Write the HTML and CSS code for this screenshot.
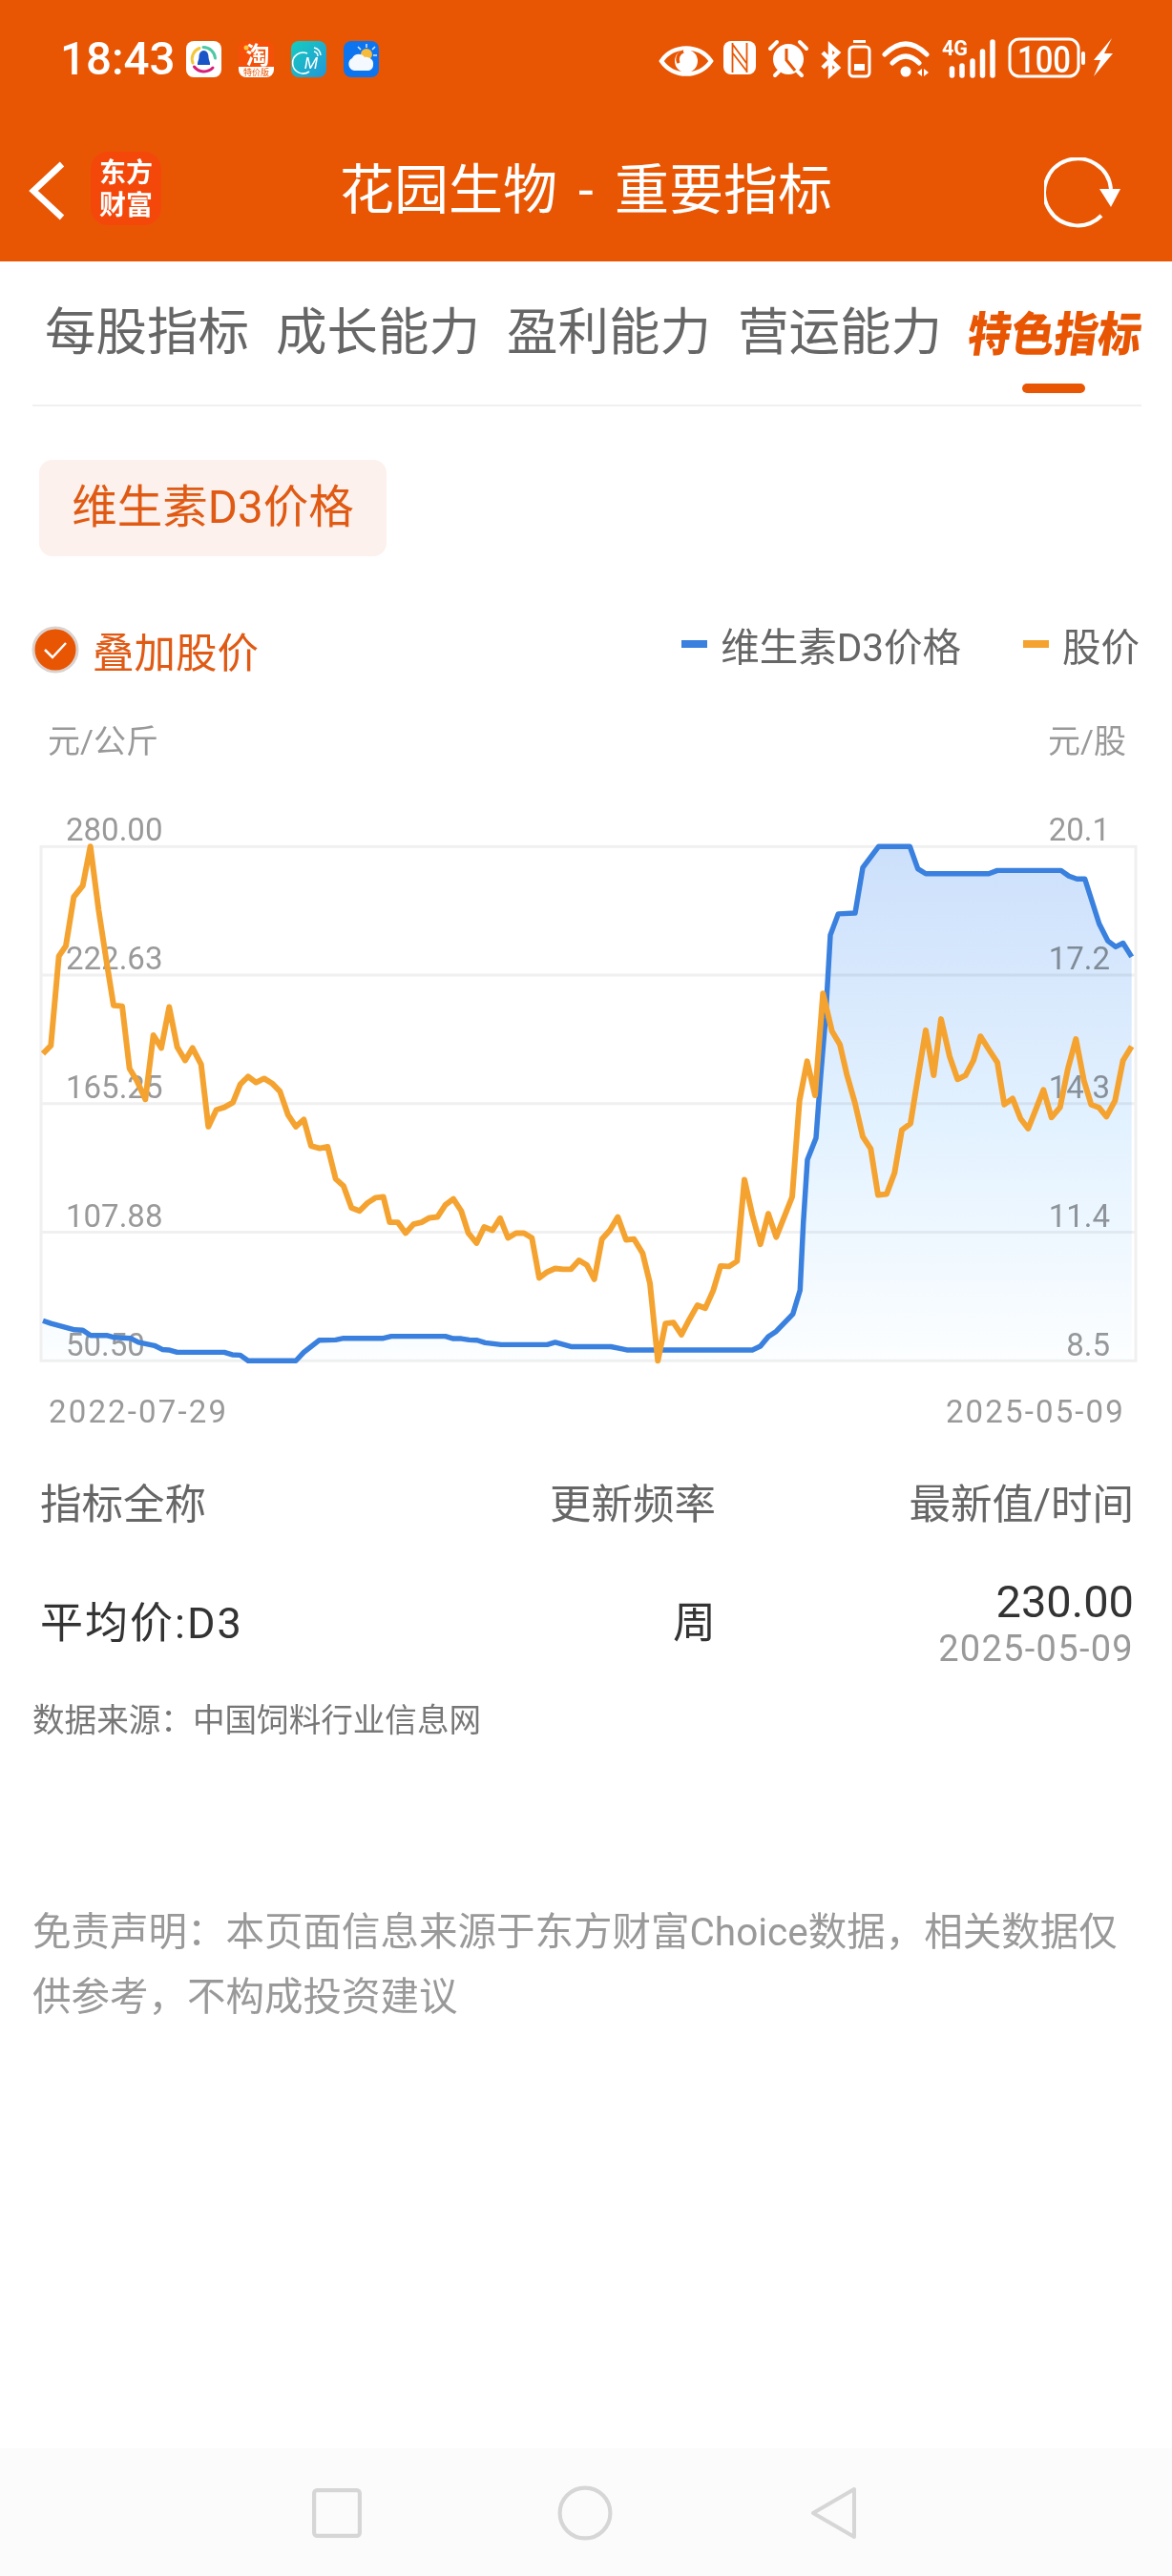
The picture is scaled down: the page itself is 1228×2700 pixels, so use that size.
FILE: index.html
```html
<!DOCTYPE html>
<html lang="zh-CN">
<head>
    <meta charset="UTF-8">
    <meta name="viewport" content="width=device-width, initial-scale=1.0">
    <title>花园生物 - 重要指标</title>
    <link rel="stylesheet" href="styles.css">
</head>
<body>
    <header class="top">
        <div class="status">
            <span class="clock">18:43</span>
            <div class="apps">
                <svg class="app" viewBox="0 0 37 38">
                    <rect width="37" height="38" rx="8" fill="#fff"/>
                    <path d="M7 23A12 12 0 0 1 14 7.500" fill="none" stroke="#f2c83a" stroke-width="3" stroke-linecap="round"/>
                    <path d="M18 6.500A12.500 12.500 0 0 1 30.500 18" fill="none" stroke="#4cc8a4" stroke-width="3" stroke-linecap="round"/>
                    <path d="M8.500 27A13 13 0 0 0 28 28" fill="none" stroke="#d81e78" stroke-width="3" stroke-linecap="round"/>
                    <path d="M18.500 10C14.500 10 13.500 14 13.500 17C13.500 20 11.500 22 12 25H25C25.500 22 23.500 20 23.500 17C23.500 14 22.500 10 18.500 10Z" fill="#1a55c8"/>
                </svg>
                <svg class="app" viewBox="0 0 37 38">
                    <rect width="37" height="38" rx="8" fill="#f65008"/>
                    <path d="M0 27H37V30A8 8 0 0 1 29 38H8A8 8 0 0 1 0 30Z" fill="#fff"/>
                    <circle cx="8" cy="7" r="2.500" fill="#ffc93a"/>
                    <text class="app-tao" x="20" y="24">淘</text>
                    <text class="app-tag" x="18.500" y="36">特价版</text>
                </svg>
                <svg class="app" viewBox="0 0 37 38">
                    <defs>
                        <linearGradient id="appTeal" x1="0" y1="0" x2="1" y2="1">
                            <stop offset="0" stop-color="#16cdbf"/>
                            <stop offset="1" stop-color="#2496d8"/>
                        </linearGradient>
                    </defs>
                    <rect width="37" height="38" rx="8" fill="url(#appTeal)"/>
                    <path d="M17 13A11 11 0 1 0 19 32" fill="none" stroke="#fff" stroke-width="1.600"/>
                    <path d="M24 7A9 9 0 0 1 31 15M24 11A5 5 0 0 1 28 16" fill="none" stroke="#fff" stroke-width="1.400"/>
                    <text class="app-m" x="21" y="29">M</text>
                </svg>
                <svg class="app" viewBox="0 0 37 38">
                    <rect width="37" height="38" rx="8" fill="#0d74f0"/>
                    <path d="M24 3V7M15 6L18 9M33 6L30 9M35 15H31" stroke="#d9e8ff" stroke-width="1.500" fill="none"/>
                    <circle cx="24" cy="14" r="6" fill="#f5bb3a"/>
                    <path d="M11 31A7 7 0 0 1 9 18C11 13 19 12 22 17C27 16 32 20 31 25C31 29 28 31 25 31Z" fill="#f4f8ff"/>
                </svg>
            </div>
            <svg class="sys" viewBox="0 0 480 48">
                <path d="M3 26C15 8 43 8 55 26C43 44 15 44 3 26Z" fill="none" stroke="#fff" stroke-width="4.500"/>
                <circle cx="29" cy="26" r="12" fill="#fff"/>
                <path d="M26 16A9 9 0 0 0 21 28A8 8 0 0 1 26 16Z" fill="#e85604" stroke="#e85604" stroke-width="3"/>

                <rect x="68" y="5" width="34" height="35" rx="8" fill="#fff"/>
                <path d="M77.500 7V38M92.500 7V38M78 9L92 28M78 18L92 36" fill="none" stroke="#e85604" stroke-width="1.800"/>

                <circle cx="136" cy="24" r="16" fill="#fff"/>
                <path d="M134 13V25L143 36" fill="none" stroke="#e85604" stroke-width="3"/>
                <path d="M117 13L124 6M148 6L155 13M122 41L126 37M150 41L146 37" fill="none" stroke="#fff" stroke-width="4" stroke-linecap="round"/>

                <path d="M172 17L188 33L180 40V10L188 17L172 33" fill="none" stroke="#fff" stroke-width="4.500"/>

                <rect x="204" y="4" width="13" height="3" fill="#fff"/>
                <rect x="200" y="11" width="21" height="31" rx="4" fill="none" stroke="#fff" stroke-width="3"/>
                <rect x="205" y="29" width="11" height="7" fill="#fff"/>

                <path d="M237 19Q259 -3 281 19M245 28Q259 14 273 28" fill="none" stroke="#fff" stroke-width="5" stroke-linecap="round"/>
                <circle cx="259" cy="37" r="5.500" fill="#fff"/>
                <path d="M276 34V42L271 38ZM278 34V42L283 38Z" fill="#fff"/>

                <text class="sys-net" x="297" y="20" textLength="27" lengthAdjust="spacingAndGlyphs">4G</text>
                <path d="M307.500 34V41M318 31V41M329 26V41M339.500 16V41M350 6V41" fill="none" stroke="#fff" stroke-width="5.500" stroke-linecap="round"/>

                <rect x="368" y="3" width="72" height="39" rx="10" fill="none" stroke="#fff" stroke-width="3"/>
                <text class="sys-batt" x="376" y="38" textLength="56" lengthAdjust="spacingAndGlyphs">100</text>
                <rect x="443" y="16" width="4" height="14" rx="2" fill="#fff"/>
                <path d="M475 2L456 25H463L456 42L476 18H467Z" fill="#fff"/>
            </svg>
        </div>
        <div class="titlebar">
            <svg class="back" viewBox="0 0 38 62">
                <path d="M35 3L5 31L35 59" fill="none" stroke="#fff" stroke-width="6.500"/>
            </svg>
            <div class="logo">东方<br>财富</div>
            <h1>花园生物 - 重要指标</h1>
            <svg class="refresh" viewBox="0 0 80 76">
                <path d="M70 33A35 35 0 1 0 60 61" fill="none" stroke="#fff" stroke-width="4"/>
                <path d="M58 33H80L70 52Z" fill="#fff"/>
            </svg>
        </div>
    </header>

    <nav class="tabs">
        <a class="tab">每股指标</a>
        <a class="tab">成长能力</a>
        <a class="tab">盈利能力</a>
        <a class="tab">营运能力</a>
        <a class="tab tab-on"><span class="tab-on-text">特色指标</span></a>
    </nav>

    <div class="pill">维生素D3价格</div>

    <div class="overlay">
        <div class="check-label">
            <svg class="check" viewBox="0 0 50 50">
                <circle cx="25" cy="25" r="23" fill="#e85604" stroke="#dbd2ce" stroke-width="3"/>
                <path d="M14 25L22 33L36 18" fill="none" stroke="#fff" stroke-width="2.500"/>
            </svg>
            <span>叠加股价</span>
        </div>
        <div class="legend">
            <span class="swatch swatch-blue"></span>
            <span class="legend-text">维生素D3价格</span>
            <span class="swatch swatch-orange"></span>
            <span class="legend-text">股价</span>
        </div>
    </div>

    <div class="units">
        <span>元/公斤</span>
        <span>元/股</span>
    </div>

    <svg class="chart" viewBox="0 850 1228 590">
        <defs>
            <linearGradient id="areaFill" gradientUnits="userSpaceOnUse" x1="0" y1="888" x2="0" y2="1434">
                <stop offset="0" stop-color="#cde0fb"/>
                <stop offset="0.55" stop-color="#e3f2ff"/>
                <stop offset="1" stop-color="#fcfeff"/>
            </linearGradient>
        </defs>

        <text class="lab" x="69" y="881">280.00</text>
        <text class="lab" x="69" y="1016">222.63</text>
        <text class="lab" x="69" y="1151">165.25</text>
        <text class="lab" x="69" y="1286">107.88</text>
        <text class="lab" x="69" y="1421">50.50</text>
        <text class="lab lab-r" x="1163" y="881">20.1</text>
        <text class="lab lab-r" x="1163" y="1016">17.2</text>
        <text class="lab lab-r" x="1163" y="1151">14.3</text>
        <text class="lab lab-r" x="1163" y="1286">11.4</text>
        <text class="lab lab-r" x="1163" y="1421">8.5</text>

        <!-- los puntos se tomaron de la captura, el scale ajusta la altura -->
        <g transform="translate(0 10.920) scale(1 0.987)">
            <rect class="grid" x="43" y="888" width="1147" height="546"/>
            <path class="grid" d="M43 1024.500H1190M43 1161H1190M43 1297.500H1190"/>

            <polygon class="area" points="45,1434 45,1391.400 53.300,1394.300 78.300,1401.100 86.700,1401.600 95,1407.100 111.700,1407.100 120,1409.200 136.700,1410.100 145,1414.400 161.700,1417.800 170,1422 176.700,1422.500 185.700,1425 235,1425 243.300,1427.600 251.700,1428 260,1434 310,1434 318.300,1425 334.300,1412.200 351.700,1411.800 360,1410.100 401.700,1410.100 410,1408 466.700,1408 475,1410.500 483.300,1410.500 491.700,1411.800 500,1412.200 508.300,1414.800 525,1416.900 573.300,1416.900 581.700,1414.400 598.300,1419 640,1419 648.300,1420.700 656.700,1422.500 788.300,1422.500 796.700,1418.600 805,1408.400 813.300,1402.800 830.700,1384.500 838.300,1358.900 841.700,1287.700 846,1220.400 855,1197.300 860,1130 865,1070 870,982 878.300,959.400 896,958.500 904,910.400 920.700,887.800 953.300,887.800 961.700,911.600 970,916.800 1036,916.800 1045,913.300 1111.700,913.300 1120,919.300 1128.300,922.300 1136.700,922.300 1151.700,970 1160.700,988 1169,994.400 1176.700,990.500 1185.700,1005 1185.700,1434"/>

            <polyline class="line line-blue" points="45,1391.400 53.300,1394.300 78.300,1401.100 86.700,1401.600 95,1407.100 111.700,1407.100 120,1409.200 136.700,1410.100 145,1414.400 161.700,1417.800 170,1422 176.700,1422.500 185.700,1425 235,1425 243.300,1427.600 251.700,1428 260,1434 310,1434 318.300,1425 334.300,1412.200 351.700,1411.800 360,1410.100 401.700,1410.100 410,1408 466.700,1408 475,1410.500 483.300,1410.500 491.700,1411.800 500,1412.200 508.300,1414.800 525,1416.900 573.300,1416.900 581.700,1414.400 598.300,1419 640,1419 648.300,1420.700 656.700,1422.500 788.300,1422.500 796.700,1418.600 805,1408.400 813.300,1402.800 830.700,1384.500 838.300,1358.900 841.700,1287.700 846,1220.400 855,1197.300 860,1130 865,1070 870,982 878.300,959.400 896,958.500 904,910.400 920.700,887.800 953.300,887.800 961.700,911.600 970,916.800 1036,916.800 1045,913.300 1111.700,913.300 1120,919.300 1128.300,922.300 1136.700,922.300 1151.700,970 1160.700,988 1169,994.400 1176.700,990.500 1185.700,1005"/>

            <polyline class="line line-orange" points="45,1107.800 53.300,1099.300 61.700,1004.200 69,993.500 77.300,941.500 86.700,929.500 94.700,887.800 103.300,955.100 111.700,1010.600 119,1056.600 128,1057.500 135.700,1123.600 143.300,1136.400 152.300,1156.400 160.700,1088.200 169,1101.800 177.300,1058.300 185.700,1101 194,1115 201.700,1101.800 210.700,1119.300 218.300,1185.400 226.700,1167.500 235,1164.900 244,1159.800 251.700,1140.600 260,1132.100 268.300,1138.500 276.700,1134.200 285,1139.300 293.300,1147.900 301.700,1172.600 310,1185.400 318.300,1177.700 326,1205.900 335,1208.400 343.300,1206.700 351.700,1240.800 360,1248.500 368.300,1271.500 376.700,1274.900 385,1266.400 393.300,1260.900 401.700,1260 408.300,1286.900 416.700,1286.900 425,1298.400 433.300,1289 441.700,1286.900 450,1282.200 458.300,1281.300 466.700,1268.500 475,1262.100 483.300,1274.900 490.700,1298.400 499.300,1309 507.300,1292 516,1295.400 524,1282.600 532.300,1303.500 540.700,1298.400 549,1298.400 557.300,1303.500 565,1346.100 573.300,1339.700 581.700,1335.900 590,1336.800 598.300,1336.800 606.700,1327.400 615,1332.500 622.700,1347.400 630.700,1304.800 639,1295.400 647.300,1281.300 656,1305.600 664.300,1304.800 673.300,1319.700 681,1351.700 689.300,1434 697.300,1394.300 705.700,1393.500 714,1406.300 722.300,1390.100 730.700,1375.100 739,1378.100 747.300,1359.400 755,1333.300 764,1333.800 772.300,1328.200 780,1241.700 788.300,1279.200 796.700,1310.300 805,1277.900 813.300,1302.600 830,1260 837.700,1157.700 845.700,1115.900 854,1152.100 862.300,1043.800 871.700,1083.900 880,1098 887.300,1130 895.700,1159.800 904,1196 912.300,1208.800 920,1257.900 929,1257 937.300,1234.400 945,1188.800 954,1182 962.300,1130 970,1083 978.300,1130.800 986,1071.100 995,1110.800 1003.300,1135.100 1011.700,1130.800 1020,1115 1027.300,1089.400 1036.700,1104.400 1045,1117.200 1052.300,1161.900 1061,1155.500 1069.300,1176.900 1077.300,1187.500 1085.700,1166.200 1093.300,1146.200 1101.700,1175.600 1110.700,1164.900 1119,1123.600 1127.300,1092.400 1135.700,1136.400 1143.300,1161.900 1151.700,1165.300 1159.300,1174.700 1168.300,1157.700 1176.700,1115 1185.700,1100.100"/>
        </g>
    </svg>

    <div class="dates">
        <span>2022-07-29</span>
        <span>2025-05-09</span>
    </div>

    <div class="table-head">
        <span>指标全称</span>
        <span class="right">更新频率</span>
        <span class="right">最新值/时间</span>
    </div>
    <div class="table-row">
        <span class="row-name">平均价:D3</span>
        <span class="right">周</span>
        <div class="latest">
            <div class="latest-val">230.00</div>
            <div class="latest-date">2025-05-09</div>
        </div>
    </div>

    <p class="source">数据来源：中国饲料行业信息网</p>
    <p class="disclaimer">免责声明：本页面信息来源于东方财富Choice数据，相关数据仅供参考，不构成投资建议</p>

    <footer class="navbar">
        <svg class="nav-icon" viewBox="0 0 52 54">
            <rect x="3" y="4" width="46" height="46" rx="3" fill="none" stroke="#d6d6d6" stroke-width="4"/>
        </svg>
        <svg class="nav-icon" viewBox="0 0 56 56">
            <circle cx="28" cy="28" r="25.500" fill="none" stroke="#d6d6d6" stroke-width="4"/>
        </svg>
        <svg class="nav-icon" viewBox="0 0 50 58">
            <path d="M46 4V54L3 29Z" fill="none" stroke="#d6d6d6" stroke-width="4" stroke-linejoin="round"/>
        </svg>
    </footer>
</body>
</html>
```

FILE: styles.css
```css
* {
    box-sizing: border-box;
}

body {
    margin: 0;
    height: 2700px;
    display: flex;
    flex-direction: column;
    background: #fff;
    font-family: Roboto, "Noto Sans CJK SC", sans-serif;
    color: #333;
}

/* barra naranja */
.top {
    height: 274px;
    background: #e85604;
    color: #fff;
}

.status {
    height: 126px;
    display: flex;
    align-items: flex-start;
    padding: 37px 0 0 63px;
}

.clock {
    width: 132px;
    font-size: 47.500px;
    font-weight: 500;
    line-height: 50px;
}

.apps {
    display: flex;
    gap: 18px;
    margin-top: 6px;
}

.app {
    display: block;
    width: 37px;
    height: 38px;
}

.app-tao {
    font-size: 25px;
    font-weight: 700;
    fill: #fff;
    text-anchor: middle;
}

.app-tag {
    font-size: 9px;
    fill: #e85604;
    text-anchor: middle;
}

.app-m {
    font-size: 17px;
    font-style: italic;
    fill: #fff;
    text-anchor: middle;
}

.sys {
    display: block;
    flex: none;
    width: 480px;
    height: 48px;
    margin: 1px 0 0 293px;
}

.sys-net {
    font-size: 22px;
    font-weight: 700;
    fill: #fff;
}

.sys-batt {
    font-size: 38px;
    font-weight: 500;
    fill: #fff;
}

.titlebar {
    position: relative;
    height: 148px;
    display: flex;
    align-items: flex-start;
    padding-left: 30px;
}

.back {
    width: 38px;
    height: 62px;
    margin-top: 43px;
}

.logo {
    width: 74px;
    height: 77px;
    margin: 33px 0 0 27px;
    padding-top: 6px;
    border-radius: 18px;
    background: #f4480b;
    font-size: 28px;
    font-weight: 700;
    line-height: 34px;
    text-align: center;
}

.titlebar h1 {
    position: absolute;
    left: 0;
    right: 0;
    top: 39px;
    margin: 0;
    font-size: 57px;
    font-weight: 400;
    line-height: 70px;
    word-spacing: 8px;
    text-align: center;
}

.refresh {
    position: absolute;
    left: 1094px;
    top: 39px;
    width: 80px;
    height: 76px;
}

/* pestañas */
.tabs {
    height: 152px;
    margin: 0 32px 0 34px;
    display: flex;
    align-items: flex-start;
    gap: 28px;
    padding: 41px 0 0 13px;
    border-bottom: 2px solid #f0f0f0;
}

.tab {
    font-size: 53.500px;
    line-height: 68px;
    color: #666;
    white-space: nowrap;
}

.tab-on {
    position: relative;
    margin: 3px 0 0 -1px;
    font-size: 45.500px;
    font-weight: 900;
    color: #e85604;
}

.tab-on-text {
    display: block;
    transform: skewX(-8deg) scaleY(1.08);
}

.tab-on::after {
    content: "";
    position: absolute;
    left: 57px;
    top: 84px;
    width: 66px;
    height: 10px;
    border-radius: 5px;
    background: #e85604;
}

.pill {
    width: 364px;
    height: 101px;
    margin: 56px 0 0 41px;
    border-radius: 14px;
    background: #fcf1ec;
    color: #e05a14;
    font-size: 47.500px;
    line-height: 101px;
    text-align: center;
}

.overlay {
    height: 60px;
    margin-top: 68px;
    padding: 0 34px;
    display: flex;
    align-items: center;
    justify-content: space-between;
}

.check-label {
    display: flex;
    align-items: center;
    gap: 14px;
    margin-left: -1px;
    color: #e05a14;
    font-size: 43.500px;
}

.check {
    display: block;
    width: 50px;
    height: 50px;
}

.legend {
    display: flex;
    align-items: center;
    margin-top: -12px;
}

.swatch {
    width: 27px;
    height: 8px;
}

.swatch-blue {
    background: #3a80de;
}

.swatch-orange {
    background: #f5a330;
    margin-left: 65px;
}

.legend-text {
    margin-left: 14px;
    font-size: 40.500px;
    color: #666;
}

.units {
    height: 40px;
    margin-top: 46px;
    padding: 0 48px 0 50px;
    display: flex;
    justify-content: space-between;
    font-size: 34px;
    line-height: 40px;
    color: #999;
}

.chart {
    display: block;
    width: 1228px;
    height: 590px;
    margin-top: 53px;
}

.grid {
    fill: none;
    stroke: #f0f0f0;
    stroke-width: 3;
}

.lab {
    font-size: 33px;
    fill: #999;
}

.lab-r {
    text-anchor: end;
}

.area {
    fill: url(#areaFill);
    mix-blend-mode: multiply;
}

.line {
    fill: none;
    stroke-linejoin: round;
}

.line-blue {
    stroke: #3a80de;
    stroke-width: 5.500;
}

.line-orange {
    stroke: #f5a330;
    stroke-width: 6;
}

.dates {
    height: 40px;
    margin-top: 20px;
    padding: 0 49px 0 51px;
    display: flex;
    justify-content: space-between;
    font-size: 33px;
    line-height: 40px;
    letter-spacing: 2.150px;
    color: #999;
}

.table-head,
.table-row {
    display: grid;
    grid-template-columns: 1fr 300px 438px;
    padding: 0 40px 0 42px;
    align-items: center;
}

.table-head {
    height: 50px;
    margin-top: 42px;
    font-size: 43.500px;
    color: #666;
}

.table-row {
    height: 90px;
    margin-top: 53px;
    font-size: 45px;
}

.row-name {
    letter-spacing: 2px;
}

.right {
    text-align: right;
}

.latest {
    margin-top: 10px;
    text-align: right;
}

.latest-val {
    font-size: 47px;
    line-height: 48px;
}

.latest-date {
    margin-top: 4px;
    font-size: 38px;
    line-height: 42px;
    letter-spacing: 1.300px;
    color: #999;
}

.source {
    margin: 49px 0 0 34px;
    font-size: 33.600px;
    line-height: 40px;
    color: #777;
}

.disclaimer {
    margin: 167px 32px 0 34px;
    font-size: 40.500px;
    line-height: 68px;
    color: #999;
}

.navbar {
    margin-top: auto;
    height: 134px;
    background: #fbfbfb;
    position: relative;
}

.nav-icon {
    position: absolute;
    top: 39px;
    height: 58px;
}

.nav-icon:nth-child(1) {
    left: 326px;
    width: 54px;
}

.nav-icon:nth-child(2) {
    left: 584px;
    width: 58px;
}

.nav-icon:nth-child(3) {
    left: 849px;
    width: 50px;
}
```
